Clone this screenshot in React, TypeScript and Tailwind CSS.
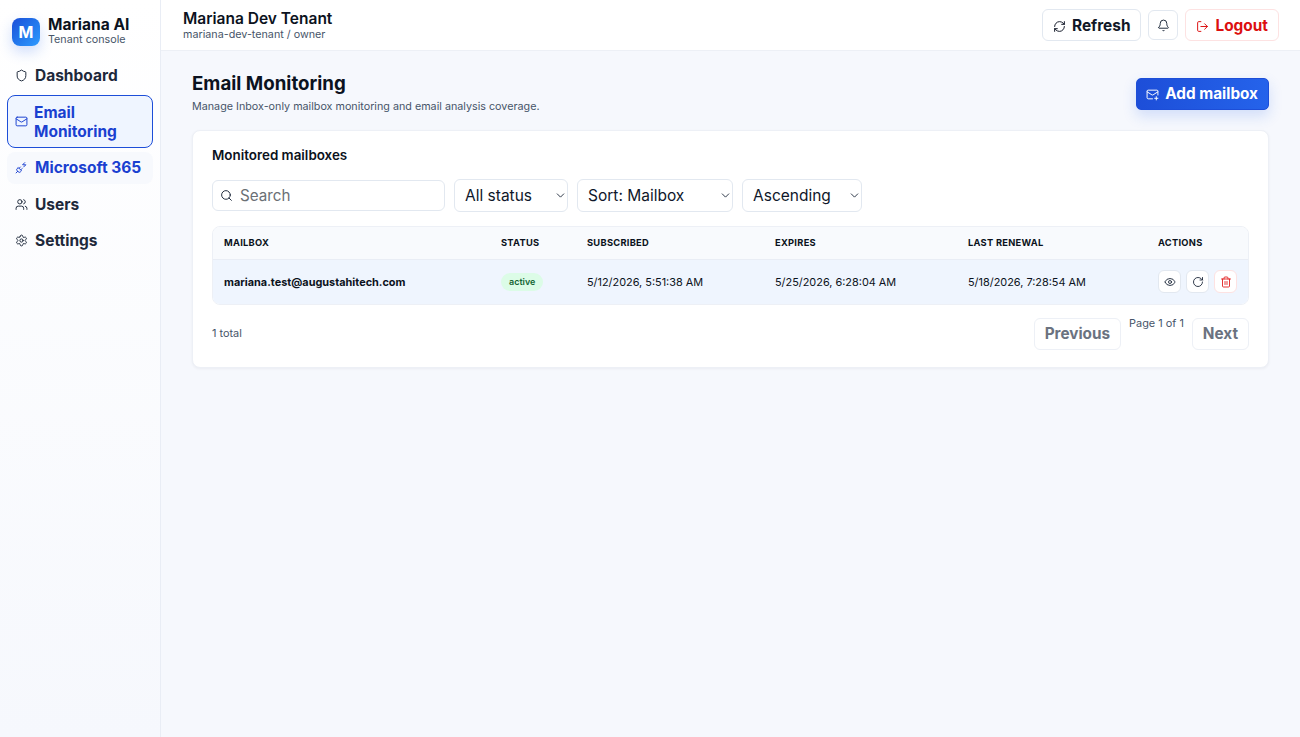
import React from "react";
import { Shield, Mail, PlugZap, Users, Settings, RefreshCw, Bell, LogOut, MailPlus, Search, Eye, RotateCw, Trash2, ChevronDown } from "lucide-react";

function NavItem({ icon: Icon, label }: { icon: any; label: string }) {
  return (
    <a className="flex h-[32.5px] items-center gap-[7px] rounded-lg px-2 text-[15.5px] font-bold text-[#1e293b]">
      <Icon size={13} strokeWidth={1.8} className="shrink-0" />
      <span>{label}</span>
    </a>
  );
}

function IconBtn({ children, danger }: { children: React.ReactNode; danger?: boolean }) {
  return (
    <button className={`flex h-[23px] w-[23px] items-center justify-center rounded-md border bg-white ${danger ? "border-[#fde2e2] text-[#e11d1d]" : "border-[#e2e8f0] text-[#1e293b]"}`}>
      {children}
    </button>
  );
}

function Select({ label, width }: { label: string; width: string }) {
  return (
    <div className={`relative ${width}`}>
      <select className="h-[33px] w-full appearance-none rounded-md border border-[#e2e8f0] bg-white px-[10px] pt-px text-[15.5px] text-[#0f172a]">
        <option>{label}</option>
      </select>
      <ChevronDown size={13} strokeWidth={1.7} className="pointer-events-none absolute right-[1px] top-[10px] text-[#1e293b]" />
    </div>
  );
}

export default function App() {
  return (
    <div className="flex h-[737px] overflow-hidden bg-[#f6f8fd] font-['Inter',sans-serif] text-[#0b1220]">
      <aside className="flex w-[161px] shrink-0 flex-col border-r border-[#e9edf5] bg-gradient-to-b from-white to-[#f6f8fd] px-[7px]">
        <div className="flex items-center gap-2 pl-[5px] pt-4">
          <div className="flex h-7 w-7 items-center justify-center rounded-lg bg-gradient-to-br from-[#1d4ed8] to-[#2f9bff] text-[16px] font-bold text-white shadow-[0_6px_14px_rgba(37,99,235,0.22)]">M</div>
          <div className="flex flex-col">
            <span className="text-[15.5px] font-bold leading-[17px] text-[#0b1220]">Mariana AI</span>
            <span className="text-[10.75px] leading-[14px] text-[#475569]">Tenant console</span>
          </div>
        </div>
        <nav className="mt-[12.3px] flex flex-col gap-[3.9px]">
          <NavItem icon={Shield} label="Dashboard" />
          <a className="-mt-[0.6px] flex h-[53px] items-center gap-[6px] rounded-lg border-[1.5px] border-[#1d4ed8] bg-[#eff5ff] px-[7px] text-[15.5px] font-bold leading-[19px] text-[#1a40d0]">
            <Mail size={13} strokeWidth={1.8} className="shrink-0" />
            <span>Email Monitoring</span>
          </a>
          <a className="flex h-8 items-center gap-[7px] rounded-lg bg-[#f7f9fd] px-2 text-[15.5px] font-bold text-[#1a40d0]">
            <PlugZap size={13} strokeWidth={1.8} className="shrink-0" />
            <span>Microsoft 365</span>
          </a>
          <NavItem icon={Users} label="Users" />
          <NavItem icon={Settings} label="Settings" />
        </nav>
      </aside>

      <div className="flex min-w-0 flex-1 flex-col">
        <header className="flex h-[51px] shrink-0 items-center justify-between border-b border-[#edf0f6] bg-white pl-[22px] pr-[21px]">
          <div>
            <div className="text-[15.5px] font-semibold leading-[19px] text-[#0b1220]">Mariana Dev Tenant</div>
            <div className="text-[10.75px] leading-[13px] text-[#475569]">mariana-dev-tenant / owner</div>
          </div>
          <div className="flex items-center gap-[7px]">
            <button className="flex h-8 items-center gap-[6px] rounded-md border border-[#e2e8f0] bg-white px-[10px] pt-[2px] text-[15.4px] font-bold text-[#111827]">
              <RefreshCw size={13} strokeWidth={1.8} />Refresh
            </button>
            <button className="flex h-[30px] w-[30px] items-center justify-center rounded-md border border-[#e2e8f0] bg-white text-[#1e293b]">
              <Bell size={13} strokeWidth={1.8} />
            </button>
            <button className="flex h-8 items-center gap-[6px] rounded-md border border-[#fde2e2] bg-white px-[10px] pt-[2px] text-[15.4px] font-bold text-[#dc0f0f]">
              <LogOut size={13} strokeWidth={1.8} />Logout
            </button>
          </div>
        </header>

        <main className="flex-1 px-[31px] pt-5">
          <div className="flex items-start justify-between">
            <div>
              <h1 className="mt-[1px] text-[18.7px] font-bold leading-6 text-[#0b1220]">Email Monitoring</h1>
              <p className="mt-[4px] text-[10.75px] leading-[14px] text-[#475569]">Manage Inbox-only mailbox monitoring and email analysis coverage.</p>
            </div>
            <button className="mt-[7px] flex h-8 items-center gap-[6px] rounded-[5px] border border-[#1d4ed8] bg-gradient-to-r from-[#1d4ed8] to-[#2563eb] pl-[9px] pr-[10px] text-[15.3px] font-bold text-white shadow-[0_6px_14px_rgba(37,99,235,0.18)]">
              <MailPlus size={13} strokeWidth={1.8} />Add mailbox
            </button>
          </div>

          <section className="mt-4 rounded-lg border border-[#edf0f6] bg-white px-[19px] pb-[17px] pt-[16px] shadow-[0_1px_3px_rgba(15,23,42,0.05)]">
            <h2 className="text-[13.4px] font-semibold leading-4 text-[#0b1220]">Monitored mailboxes</h2>
            <div className="mt-4 flex items-center gap-[9px]">
              <div className="flex h-[31px] w-[233px] items-center gap-[7px] rounded-md border border-[#e2e8f0] bg-white px-[7px]">
                <Search size={13} strokeWidth={1.8} className="shrink-0 text-[#1e293b]" />
                <input placeholder="Search" className="min-w-0 flex-1 bg-transparent pt-px text-[15.2px] outline-none placeholder:text-[#6b7075]" />
              </div>
              <Select label="All status" width="w-[114px]" />
              <Select label="Sort: Mailbox" width="w-[156px]" />
              <Select label="Ascending" width="w-[120px]" />
            </div>

            <div className="mt-[14px] overflow-hidden rounded-lg border border-[#edf0f6]">
              <table className="w-full table-fixed border-collapse text-left">
                <thead>
                  <tr className="h-[32px] border-b border-[#e9edf5] bg-[#f8fafd] text-[9.3px] uppercase tracking-[0.03em] text-[#0b1220]">
                    <th className="w-[288px] pl-[11px] font-bold">Mailbox</th>
                    <th className="w-[86px] font-bold">Status</th>
                    <th className="w-[188px] font-bold">Subscribed</th>
                    <th className="w-[193px] font-bold">Expires</th>
                    <th className="w-[190px] font-bold">Last renewal</th>
                    <th className="font-bold">Actions</th>
                  </tr>
                </thead>
                <tbody>
                  <tr className="h-[45px] bg-[#eff5fe] text-[10.9px] text-[#0b1220]">
                    <td className="pl-[11px] font-bold">mariana.test@augustahitech.com</td>
                    <td>
                      <span className="inline-flex h-[18px] items-center rounded-full bg-[#dcfce7] px-2 text-[9px] font-semibold text-[#166534]">active</span>
                    </td>
                    <td>5/12/2026, 5:51:38 AM</td>
                    <td>5/25/2026, 6:28:04 AM</td>
                    <td>5/18/2026, 7:28:54 AM</td>
                    <td>
                      <div className="flex gap-[5px]">
                        <IconBtn><Eye size={12} strokeWidth={1.8} /></IconBtn>
                        <IconBtn><RotateCw size={12} strokeWidth={1.8} /></IconBtn>
                        <IconBtn danger><Trash2 size={12} strokeWidth={1.8} /></IconBtn>
                      </div>
                    </td>
                  </tr>
                </tbody>
              </table>
            </div>

            <div className="mt-[13px] flex items-center justify-between">
              <span className="pb-[2px] text-[10.9px] text-[#475569]">1 total</span>
              <div className="flex items-start gap-2">
                <button className="h-8 rounded-md border border-[#edf0f6] bg-white px-[10px] text-[15.3px] font-bold text-[#6b7280]">Previous</button>
                <span className="-mt-[2px] text-[10.9px] leading-[14px] text-[#475569]">Page 1 of 1</span>
                <button className="h-8 rounded-md border border-[#edf0f6] bg-white px-[10px] text-[15.3px] font-bold text-[#6b7280]">Next</button>
              </div>
            </div>
          </section>
        </main>
      </div>
    </div>
  );
}
